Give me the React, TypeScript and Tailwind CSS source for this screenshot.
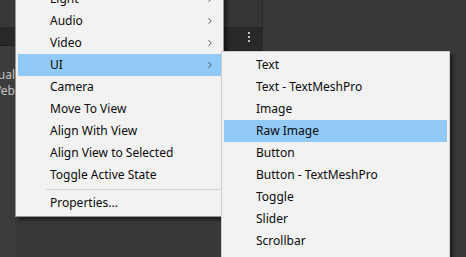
import { ChevronRight } from 'lucide-react';

const mainItems = [
  { label: 'Light', sub: true },
  { label: 'Audio', sub: true },
  { label: 'Video', sub: true },
  { label: 'UI', sub: true, active: true },
  { label: 'Camera' },
  { label: 'Move To View' },
  { label: 'Align With View' },
  { label: 'Align View to Selected' },
  { label: 'Toggle Active State' },
];

const uiItems = [
  'Text',
  'Text - TextMeshPro',
  'Image',
  'Raw Image',
  'Button',
  'Button - TextMeshPro',
  'Toggle',
  'Slider',
  'Scrollbar',
  'Dropdown',
];

function MenuRow({ label, sub, active }: { label: string; sub?: boolean; active?: boolean }) {
  return (
    <div
      className={`flex items-center h-[22px] pl-[32px] pr-[6px] text-[12px] text-[#0a0a0a] whitespace-nowrap ${
        active ? 'bg-[#91c9f7]' : ''
      }`}
    >
      <span className="flex-1">{label}</span>
      {sub && <ChevronRight size={10} strokeWidth={2} className="text-[#333]" />}
    </div>
  );
}

export default function App() {
  return (
    <div
      className="relative w-[466px] h-[257px] overflow-hidden bg-[#383838]"
      style={{ fontFamily: '"Noto Sans", "Liberation Sans", sans-serif' }}
    >
      {/* Editor behind the menus */}
      <div className="flex h-full">
        <div className="flex flex-col w-[15px]">
          <div className="h-[27px] bg-[#383838]" />
          <div className="h-[19px] bg-[#282828] border-b border-[#1e1e1e]" />
          <div className="flex-1 bg-[#3c3c3c] pt-[21px] overflow-hidden">
            <div className="flex flex-col items-end text-[12px] leading-[16px] text-[#c4c4c4] whitespace-nowrap">
              <span>Visual</span>
              <span>Web</span>
            </div>
          </div>
        </div>
        <div className="w-[206px]" />
        <div className="flex flex-col w-[42px] border-r border-[#2a2a2a]">
          <div className="h-[27px] bg-[#353535]" />
          <div className="h-[24px] bg-[#282828] flex justify-end pr-[12px] pt-[5px]">
            <div className="flex flex-col gap-[2px]">
              <span className="w-[2px] h-[2px] bg-[#c0c0c0]" />
              <span className="w-[2px] h-[2px] bg-[#c0c0c0]" />
              <span className="w-[2px] h-[2px] bg-[#c0c0c0]" />
            </div>
          </div>
          <div className="flex-1 bg-[#383838]" />
        </div>
        <div className="flex-1" />
      </div>

      {/* Context menu */}
      <div className="absolute left-[15px] top-[-15px] w-[209px] bg-[#f2f2f2] border border-[#979797] p-[2px] shadow-[3px_3px_3px_rgba(0,0,0,0.45)]">
        {mainItems.map((it) => (
          <MenuRow key={it.label} {...it} />
        ))}
        <div className="h-[6px] flex items-center pl-[28px]">
          <div className="h-px w-full bg-[#d4d4d4]" />
        </div>
        <MenuRow label="Properties..." />
      </div>

      {/* UI submenu */}
      <div className="absolute left-[221px] top-[51px] w-[229px] bg-[#f2f2f2] border border-[#cccccc] p-[2px] shadow-[3px_3px_3px_rgba(0,0,0,0.45)]">
        {uiItems.map((label) => (
          <MenuRow key={label} label={label} active={label === 'Raw Image'} />
        ))}
      </div>
    </div>
  );
}
